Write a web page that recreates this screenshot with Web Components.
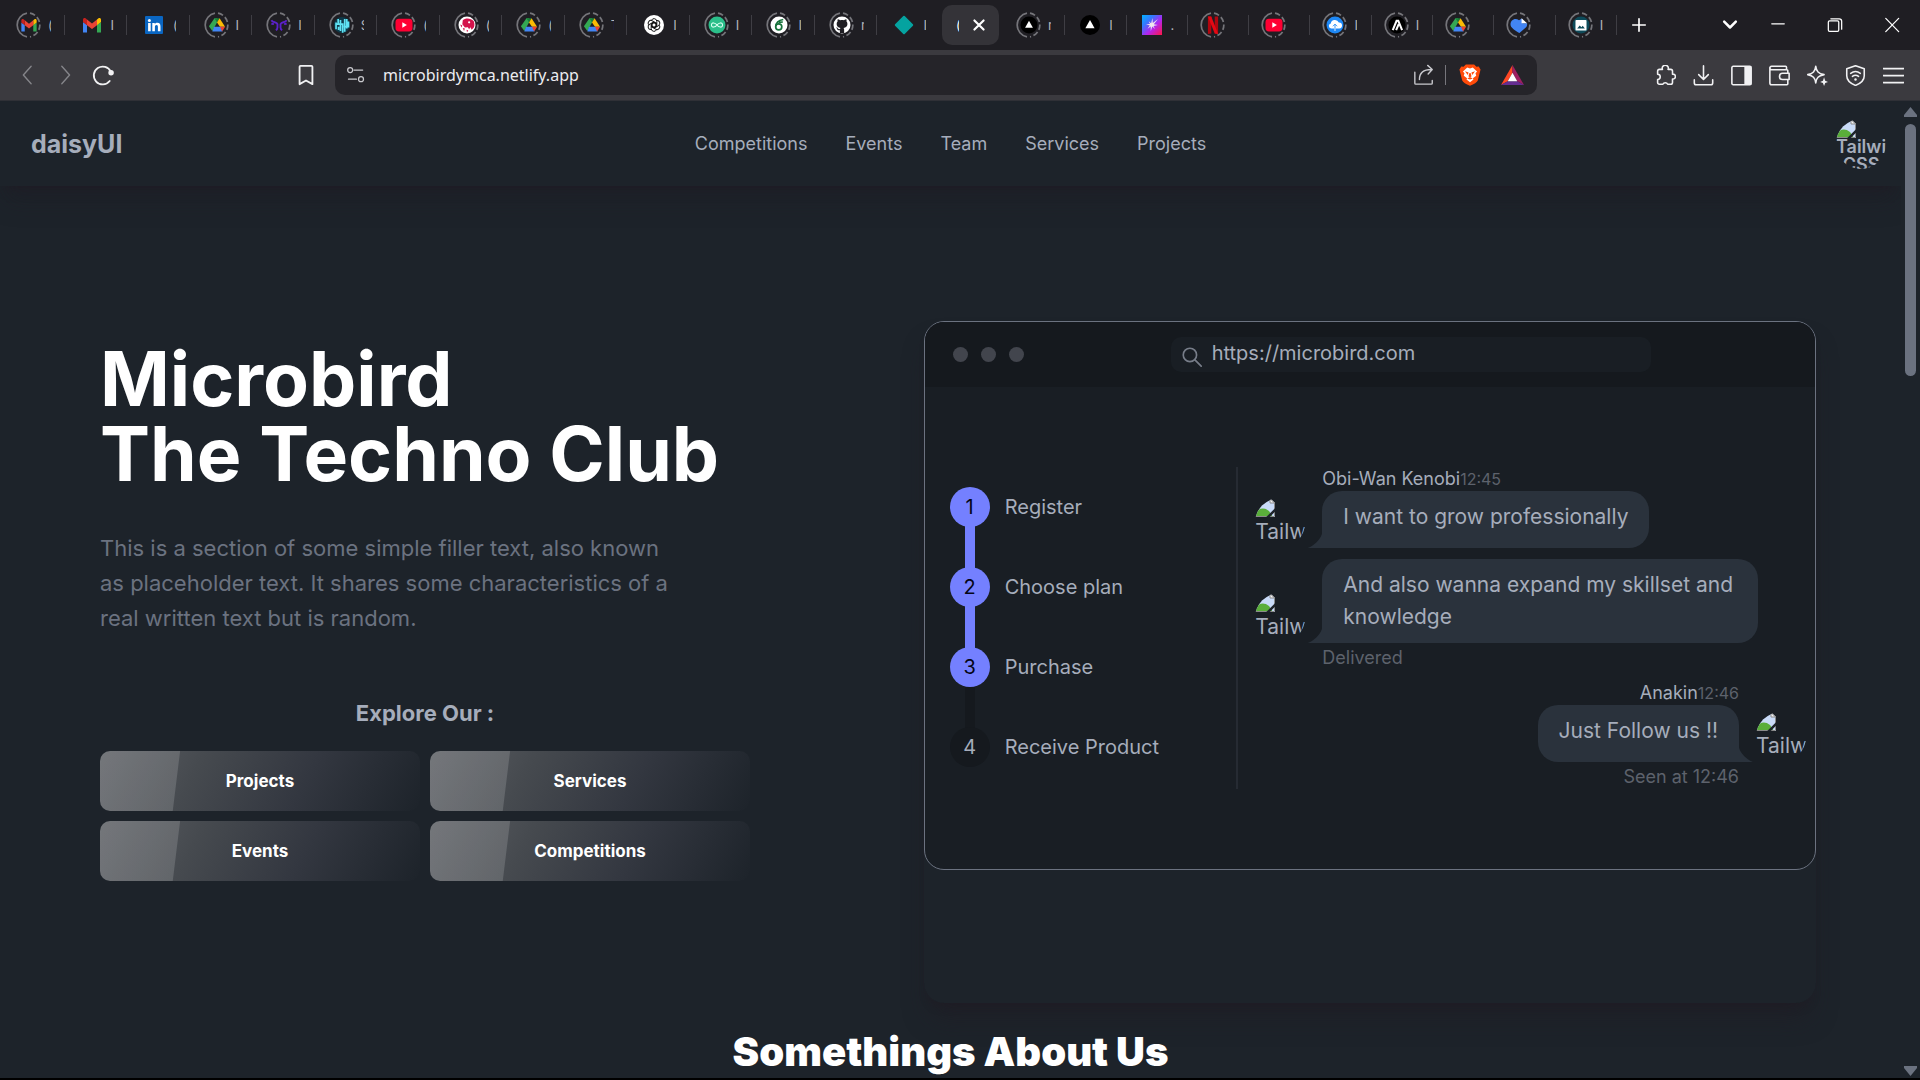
<!DOCTYPE html>
<html lang="en">
<head>
<meta charset="utf-8">
<title>Microbird</title>
<style>
  html, body {
    margin: 0;
    height: 100%;
    overflow: hidden;
    background: #000000;
    font-family: Inter, "Liberation Sans", sans-serif;
  }
</style>
</head>
<body>
<mb-window>
  <mb-tab-strip slot="chrome"></mb-tab-strip>
  <mb-toolbar slot="chrome" url="microbirdymca.netlify.app"></mb-toolbar>
  <mb-navbar></mb-navbar>
  <mb-hero>
    <mb-intro></mb-intro>
    <mb-mockup slot="aside" url="https://microbird.com">
      <mb-steps slot="steps"></mb-steps>
      <mb-chat name="Obi-Wan Kenobi" time="12:45">I want to grow professionally</mb-chat>
      <mb-chat footer="Delivered">And also wanna expand my skillset and knowledge</mb-chat>
      <mb-chat end name="Anakin" time="12:46" footer="Seen at 12:46">Just Follow us !!</mb-chat>
    </mb-mockup>
  </mb-hero>
  <mb-section-title>Somethings About Us</mb-section-title>
</mb-window>

<script>
'use strict';

// Favicons, drawn on a 20x20 board
const FAVICONS = {
  gmail: `
    <path fill="#4285f4" d="M1 17.500V7l4 3v7.500z"/>
    <path fill="#34a853" d="M15 17.500V10l4-3v10.500z"/>
    <path fill="#fbbc04" d="M15 4.500l1.500-1.200C17.600 2.400 19 3.200 19 4.600V7l-4 3.200z"/>
    <path fill="#ea4335" d="M5 10.200V4.500l5 3.900 5-3.900v5.700l-5 3.900z"/>
    <path fill="#c5221f" d="M1 7V4.600c0-1.400 1.400-2.200 2.500-1.300L5 4.500v5.700z"/>`,
  linkedin: `
    <rect x="1" y="1" width="18" height="18" rx="1" fill="#0a66c2"/>
    <circle cx="5.400" cy="5.400" r="1.500" fill="#fff"/>
    <path fill="#fff" d="M4.100 8h2.600v8.300H4.100zM8.300 8h2.500v1.200c.5-.9 1.500-1.400 2.600-1.400 2.400 0 3.100 1.500 3.100 3.900v4.600h-2.600v-4.200c0-1.300-.3-2.100-1.400-2.100s-1.600.9-1.600 2.100v4.200H8.300z"/>`,
  drive: `
    <path fill="#34a853" d="M7 2h3l0 5-5.500 10-4-5.500z"/>
    <path fill="#188038" d="M7 2h6l-3 5z"/>
    <path fill="#fbbc04" d="M13 2l6.500 10h-6L10 7z"/>
    <path fill="#4285f4" d="M6.500 12h9l1 5.500h-12z"/>
    <path fill="#ea4335" d="M13.500 12h6l-3.500 5.500z"/>`,
  antlers: `
    <path fill="none" stroke="#5b21c9" stroke-width="2.200" d="M1 4.500c2 3.500 6 1 7.200 4.500v4c0 1.500-.7 2.500-2 3M19 4.500c-2 3.500-6 1-7.200 4.500v4c0 1.500.7 2.500 2 3M1 8.500l3 .5M19 8.500l-3 .5"/>`,
  wave: `
    <circle cx="10" cy="10" r="9.500" fill="#0f3a4a"/>
    <path fill="none" stroke="#5fe3f4" stroke-width="2" d="M3 7v8M5.500 3v7M6 12v4M8.200 4v13M10.800 8v11M13.200 3v15M15.600 3v11M17.600 6v7M4 9h6M12 12h5"/>`,
  youtube: `
    <rect x="0" y="2.500" width="20" height="15" rx="4" fill="#ff0033"/>
    <path fill="#fff" d="M8 6.800v6.400l5.400-3.200z"/>`,
  dino: `
    <circle cx="10" cy="10" r="10" fill="#fff"/>
    <path fill="#d4124b" d="M5 4.500C8 1.500 14 1.500 18 5.500c1 2.500 1 5.500 0 7.500l-2.500 2.500-1.500-3-1.500 2.500-1.500-2.300-3.500.3L4.500 9z"/>
    <circle cx="12.500" cy="6.800" r="1.300" fill="#fff"/>
    <path fill="#d4124b" d="M2 9.500l2.500 1-1 2.500zM5 13.500l2.500.5-1 3zM9.500 15.500l2 1-1.500 2z"/>`,
  openai: `
    <circle cx="10" cy="10" r="10" fill="#fff"/>
    <g fill="none" stroke="#111" stroke-width="1">
      ${[0, 60, 120, 180, 240, 300].map(deg => `
        <path transform="rotate(${deg} 10 10)" d="M7.500 5.200a2.800 2.800 0 0 1 5.300 1.300v4.300l-2.800 1.600-2.800-1.600"/>`).join('')}
    </g>`,
  infinity: `
    <circle cx="10" cy="10" r="10" fill="#2bbf8a"/>
    <path fill="none" stroke="#d7fff0" stroke-width="1.300" d="M10 10c-2-3-6.500-3.500-6.500 0s4.500 3 6.500 0 6.500-3.500 6.500 0-4.500 3-6.500 0"/>`,
  six: `
    <circle cx="10" cy="10" r="10" fill="#fff"/>
    <circle cx="9.700" cy="12.200" r="3.600" fill="none" stroke="#18733c" stroke-width="2"/>
    <path fill="none" stroke="#18733c" stroke-width="2" d="M6.200 11.500C6.500 7 9.500 4.500 15 3.500M9.500 6.800l5-.3"/>`,
  github: `
    <circle cx="10" cy="10" r="10" fill="#fff"/>
    <path fill="#1f1e23" d="M7.500 19.500v-3.300c-2 .4-2.900-.6-3.400-1.900-.3-.7-1-1-1-1.300 1-.5 1.800.4 2.200 1.100.6.900 1.400.9 2.300.6.100-.6.400-1 .7-1.300-2.800-.4-4.600-1.700-4.600-4.600 0-1.200.4-2 1.100-2.800-.2-.9-.2-1.900.2-2.800 1 0 1.900.5 2.800 1.100 1.400-.3 3.100-.3 4.500 0 .9-.6 1.800-1.100 2.800-1.100.4.900.4 1.900.2 2.800.7.800 1.100 1.600 1.100 2.800 0 2.900-1.800 4.200-4.600 4.600.5.500.7 1.200.7 2.100v4z"/>`,
  diamond: `<rect x="3.200" y="3.200" width="13.600" height="13.600" rx="1" transform="rotate(45 10 10)" fill="#05a3a0"/>`,
  vercel: `
    <circle cx="10" cy="10" r="10" fill="#000"/>
    <path fill="#fff" d="M10 5l4.600 8.200H5.400z"/>`,
  spark: `
    <defs><linearGradient id="sp" x1="0" y1="0" x2="1" y2="1">
      <stop offset="0" stop-color="#00b2ff"/><stop offset=".3" stop-color="#3478ff"/>
      <stop offset=".6" stop-color="#b423ee"/><stop offset="1" stop-color="#ff1744"/>
    </linearGradient></defs>
    <rect width="20" height="20" fill="url(#sp)"/>
    <path fill="#efe6ee" d="M10.500 3l.3 5 5.200-4-4.200 5.200 4 .8-4.300.9 1.500 3.100-2.700-2.400L8.800 16l-.1-4.500-3.200 2.200 2.300-3.300L4 9.300l4-.4-1.300-2.600 2.400 1.900z"/>`,
  netflix: `
    <path fill="#b1060f" d="M4 0h4v20l-4 .5zM12 0h4v20.500l-4-.5z"/>
    <path fill="#e50914" d="M4 0h4l8 20.500-4-.5z"/>`,
  cloud: `
    <circle cx="10" cy="10" r="10" fill="#1e88f5"/>
    <path fill="#fff" d="M5.500 14a3 3 0 0 1-.5-5.900A5 5 0 0 1 14.500 7a3.500 3.500 0 0 1 .5 7z"/>
    <path fill="none" stroke="#1e88f5" stroke-width="1" d="M10 14V9M7.500 11.500L10 9l2.500 2.500"/>
    <path stroke="#fff" d="M10 14v3"/>`,
  peak: `
    <circle cx="10" cy="10" r="10" fill="#000"/>
    <path fill="none" stroke="#fff" stroke-width="2.400" d="M5 16l4.500-11h2L16 16M9 16l3-7"/>`,
  heart: `
    <path fill="#4285f4" d="M0 9.500C0 4 5.500 1 10 4.500c1.500-1.500 3-2 4-2V8h5.500c.3 2.500-.5 4-1.500 5l-7.500 6.500C6 17 0 13.500 0 9.500z"/>
    <path fill="#fff" d="M13 2l6.500 6H13z"/>`,
  photo: `
    <circle cx="10" cy="10" r="10" fill="#0d4a59"/>
    <rect x="3.500" y="4" width="13" height="12.500" rx="1" fill="#fff"/>
    <path fill="#0d4a59" d="M5.500 14l3-3.500 2 2 1.500-1.500 2.500 3z"/>`
};

// Window and toolbar icons, drawn on a 24x24 board with currentColor strokes
const ICONS = {
  back: '<path d="M16.500 2.500L8 12l8.500 9.500"/>',
  forward: '<path d="M8.500 2.500L17 12l-8.500 9.500"/>',
  reload: '<path stroke-width="2" d="M20.500 8.500A9.700 9.700 0 1 0 19.300 18.500"/><circle cx="20.800" cy="9.600" r="3" fill="currentColor" stroke="none"/>',
  bookmark: '<path stroke-width="2" d="M6 2h12a1 1 0 0 1 1 1v19l-7-4-7 4V3a1 1 0 0 1 1-1z"/>',
  tune: '<circle cx="5" cy="6" r="3"/><path d="M9.500 6H20M3 17h9.500"/><circle cx="18" cy="17" r="3"/>',
  share: '<path d="M2 9v12a1 1 0 0 0 1 1h17a1 1 0 0 0 1-1v-3M7 17c0-7 4-11 13-11M16 1.500L21 6l-4.500 5"/>',
  puzzle: '<path stroke-width="1.800" d="M3 7a2 2 0 0 1 2-2h3.500a3.500 3.500 0 1 1 6.500 0H18a2 2 0 0 1 2 2v3.500a2.800 2.800 0 1 1 0 5.500V20a2 2 0 0 1-2 2h-3.500a3 3 0 0 0-5.500 0H5a2 2 0 0 1-2-2v-3.500a3 3 0 0 0 0-6z"/>',
  download: '<path stroke-width="1.800" d="M12 1v15M6.500 11l5.500 5.500 5.500-5.500M1.500 17v3.500a2 2 0 0 0 2 2h17a2 2 0 0 0 2-2V17"/>',
  panel: '<rect x="1" y="1.500" width="22" height="21" rx="1.500" stroke-width="1.800"/><path fill="currentColor" d="M16 2h6.500v20H16z"/>',
  wallet: '<path stroke-width="1.800" d="M20 4.500V2.500a1 1 0 0 0-1-1H3A2 2 0 0 0 1 4v16.500a2 2 0 0 0 2 2h17.500a1 1 0 0 0 1-1V17M1 3.500a2 2 0 0 0 2 2h17.500a1 1 0 0 1 1 1V9.500M23 9.500h-7.500a3.500 3.500 0 0 0 0 7H23z"/>',
  sparkle: '<path stroke-width="1.800" d="M10 1.500c.8 6 3 8 9.500 9.500-6.500 1.500-8.700 3.500-9.500 9.500C9.200 14.500 7 12.500.8 11 7 9.500 9.200 7.500 10 1.500z"/><path stroke="none" fill="#3b3a3f" d="M14 15h10v9H14z"/><path stroke="none" fill="currentColor" d="M19.500 14l1.300 4 3.200 1.300-3.200 1.200-1.300 3.500-1.300-3.500-3.200-1.200 3.200-1.300z"/>',
  vpn: '<path stroke-width="1.800" d="M12 .8l10 3.500v8c0 5-4 8.700-10 11-6-2.300-10-6-10-11v-8z"/><path stroke-width="1.800" d="M6.500 9.500c3.500-2.700 7.500-2.700 11 0M8.500 13c2.200-1.700 4.800-1.700 7 0"/><circle cx="12" cy="16.500" r="1.400" fill="currentColor" stroke="none"/>',
  menu: '<path stroke-width="2" d="M.5 4h23M.5 12h23M.5 20h23"/>',
  plus: '<path stroke-width="2" d="M12 4.500v15M4.500 12h15"/>',
  chevron: '<path stroke-width="3" d="M5 8l7 7 7-7"/>',
  minimize: '<path stroke-width="1.500" d="M4.500 10.500h15"/>',
  restore: '<rect x="4" y="7" width="12.500" height="12.500" rx="1.500"/><path d="M7 4.500h10a3 3 0 0 1 3 3V17"/>',
  close: '<path d="M4.500 4l15.500 16M20 4L4.500 20"/>',
  cross: '<path stroke-width="2.600" d="M6.500 6.500l11 11M17.500 6.500l-11 11"/>',
  search: '<circle cx="9.500" cy="9.500" r="8" stroke-width="2"/><path stroke-width="2" d="M15.500 15.500l7.500 7.500"/>',
  brave: `<path fill="#ff4b0a" stroke="none" d="M7.500.5h9l2.500 2.500 2.500-.3L23.500 6l-.7 3-2.300 9c-.7 2-4 4-8.500 5.700C7.500 22 4.200 20 3.500 18L1.200 9 .5 6l2-3.300L5 3z"/>
    <path fill="#fff" stroke="none" d="M12 5l3-1.200 4.700 4.500L18 10.200l.8 2.600-3.600 2.700.6 1.500L12 20l-3.800-3 .6-1.500-3.600-2.700.8-2.600-1.700-1.900L9 3.800z"/>
    <path fill="#ff4b0a" stroke="none" d="M6.500 8l4 1.300-1 2.700zM17.500 8l-4 1.300 1 2.700zM11 10h2l.6 3.500-1.600 1-1.600-1zM9 15.800l3-1.600 3 1.600-3 1z"/>`,
  bat: `<g stroke="none"><path fill="#ff4724" d="M12 1L0 22l7-4 5-9z"/><path fill="#9e1f63" d="M12 1l12 21-7-4-5-9z"/><path fill="#662d91" d="M0 22h24l-7-4H7z"/><path fill="#fff" d="M12 9l5 9H7z"/></g>`
};

function icon(name, size = 24) {
  return `<svg width="${size}" height="${size}" viewBox="0 0 24 24" fill="none" stroke="currentColor"
    stroke-width="1.500" stroke-linecap="round" stroke-linejoin="round" aria-hidden="true">${ICONS[name]}</svg>`;
}

class MbElement extends HTMLElement {
  constructor() {
    super();
    const template = document.createElement('template');
    template.innerHTML = `
      <style>
        * { box-sizing: border-box; }
        svg { display: block; flex: none; }
        a { color: inherit; text-decoration: none; }
        button, input { font: inherit; color: inherit; background: none; border: 0; padding: 0; margin: 0; }
        button { display: grid; place-items: center; }
      </style>
      ${this.markup()}`;
    this._sR = this.attachShadow({ mode: 'open' });
    this._sR.appendChild(template.content.cloneNode(true));
  }
}

window.customElements.define('mb-window', class extends MbElement {
  markup() {
    return `
      <style>
        :host {
          display: flex;
          flex-direction: column;
          height: 100vh;
          padding-bottom: 2px;
          box-sizing: border-box;
        }
        .view {
          flex: 1;
          min-height: 0;
          display: flex;
          background: #1d232a;
          color: #a6adbb;
        }
        .page { flex: 1; min-width: 0; overflow: hidden; }
        .scrollbar {
          width: 19px;
          display: flex;
          flex-direction: column;
          align-items: center;
          gap: 7px;
          padding: 6px 0 2px;
          box-sizing: border-box;
        }
        .scrollbar svg { fill: #6b7280; }
        .track { flex: 1; width: 11px; }
        .thumb { height: 27%; border-radius: 6px; background: #6b7280; }
      </style>
      <slot name="chrome"></slot>
      <div class="view">
        <main class="page"><slot></slot></main>
        <div class="scrollbar" aria-hidden="true">
          <svg width="13" height="10" viewBox="0 0 13 10"><path d="M6.500 0L13 8v2H0V8z"/></svg>
          <div class="track"><div class="thumb"></div></div>
          <svg width="13" height="10" viewBox="0 0 13 10"><path d="M6.500 10L13 2V0H0v2z"/></svg>
        </div>
      </div>`;
  }
});

window.customElements.define('mb-favicon', class extends MbElement {
  markup() {
    const ring = this.hasAttribute('ring');
    const art = FAVICONS[this.getAttribute('name')] || '';
    // Sleeping tabs get a ring, solid on the left and dashed on the right
    return `
      <style>
        :host { display: block; width: 26px; height: 26px; }
      </style>
      <svg width="26" height="26" viewBox="0 0 26 26" aria-hidden="true">
        ${ring ? `
          <path d="M11 1.200A12 12 0 0 0 11 24.800" fill="none" stroke="#75757a" stroke-width="1.700"/>
          <path d="M14 1.200A12 12 0 0 1 14 24.800" fill="none" stroke="#75757a" stroke-width="1.700" stroke-dasharray="5.500 2.500"/>
          <g transform="translate(4.500 4.500) scale(.85)">${art}</g>`
        : `<g transform="translate(3 3)">${art}</g>`}
      </svg>`;
  }
});

window.customElements.define('mb-tab-strip', class extends MbElement {
  tabs(list) {
    return list.map(([name, label, ring]) => `
      <button class="tab" type="button" aria-label="${name}">
        <mb-favicon name="${name}" ${ring ? 'ring' : ''}></mb-favicon>
        <span>${label}</span>
      </button>`).join('');
  }

  markup() {
    const left = [
      ['gmail', '(', 1], ['gmail', 'I', 0], ['linkedin', '(', 0], ['drive', 'I', 1], ['antlers', 'I', 1],
      ['wave', 'S', 1], ['youtube', '(', 1], ['dino', '(', 1], ['drive', '(', 1], ['drive', 'T', 1],
      ['openai', 'I', 0], ['infinity', 'I', 1], ['six', 'I', 1], ['github', 'r', 1], ['diamond', 'I', 0]
    ];
    const right = [
      ['vercel', 'r', 1], ['vercel', 'I', 0], ['spark', '.', 0], ['netflix', '', 1], ['youtube', '', 1],
      ['cloud', 'I', 1], ['peak', 'I', 1], ['drive', '', 1], ['heart', '', 1], ['photo', 'I', 1]
    ];
    return `
      <style>
        :host {
          display: flex;
          align-items: center;
          height: 50px;
          padding-left: 2px;
          background: #1f1e23;
          color: #ffffff;
          box-sizing: border-box;
        }
        .group { display: flex; min-width: 0; }
        .left { flex: 938 1 0; margin-right: 2px; }
        .right { flex: 613 1 0; margin-left: 5px; }
        .tab {
          flex: 1 1 0;
          min-width: 0;
          display: flex;
          align-items: center;
          height: 20px;
          padding-left: 14px;
          border-right: 1px solid #3f3e44;
        }
        .right .tab { padding-left: 12px; }
        .left .tab:last-child { border-color: transparent; }
        .tab span {
          width: 3px;
          margin-left: 6px;
          overflow: hidden;
          font-size: 13px;
          line-height: 20px;
          color: #b5b5ba;
        }
        .active {
          width: 57px;
          height: 40px;
          display: flex;
          align-items: center;
          gap: 10px;
          padding-left: 14px;
          border-radius: 10px;
          background: #343338;
        }
        .active span { width: 3px; overflow: hidden; font-size: 13px; }
        .controls { display: flex; }
        .controls button { width: 57px; }
        .controls button:first-child { width: 43px; margin-right: 50px; }
        .controls button:nth-child(2) { width: 39px; }
      </style>
      <div class="group left">${this.tabs(left)}</div>
      <div class="active">
        <span>(</span>
        <button type="button" aria-label="Close tab">${icon('cross', 20)}</button>
      </div>
      <div class="group right">${this.tabs(right)}</div>
      <div class="controls">
        <button type="button" aria-label="New tab">${icon('plus', 20)}</button>
        <button type="button" aria-label="Search tabs">${icon('chevron', 20)}</button>
        <button type="button" aria-label="Minimize">${icon('minimize', 20)}</button>
        <button type="button" aria-label="Restore">${icon('restore', 20)}</button>
        <button type="button" aria-label="Close">${icon('close', 20)}</button>
      </div>`;
  }
});

window.customElements.define('mb-toolbar', class extends MbElement {
  markup() {
    return `
      <style>
        :host {
          display: flex;
          align-items: center;
          height: 51px;
          padding: 0 16px;
          background: #3b3a3f;
          border-bottom: 1px solid #2f3036;
          color: #f1f1f3;
          box-sizing: border-box;
        }
        .history { display: flex; gap: 16px; }
        .history button:not(:last-child) { color: #85858a; }
        .bookmark { margin-left: auto; }
        .address {
          flex: 0 0 1202px;
          display: flex;
          align-items: center;
          height: 40px;
          margin: 0 118px 0 18px;
          padding: 0 13px 0 11px;
          border-radius: 10px;
          background: #252429;
          color: #c9c9ce;
        }
        .address input {
          flex: 1;
          min-width: 0;
          margin-left: 17px;
          font-family: "Noto Sans", "Open Sans", sans-serif;
          font-size: 16px;
          color: #ececf0;
          outline: 0;
        }
        .rule { width: 1px; height: 20px; margin: 0 13px 0 10px; background: #77767c; }
        .shield { margin-right: 20px; }
        .tools { display: flex; gap: 17px; }
      </style>
      <div class="history">
        <button type="button" aria-label="Back">${icon('back', 22)}</button>
        <button type="button" aria-label="Forward">${icon('forward', 22)}</button>
        <button type="button" aria-label="Reload">${icon('reload', 22)}</button>
      </div>
      <button class="bookmark" type="button" aria-label="Bookmark">${icon('bookmark', 22)}</button>
      <div class="address">
        <button type="button" aria-label="Site settings">${icon('tune', 20)}</button>
        <input type="text" aria-label="Address" value="${this.getAttribute('url')}">
        <button type="button" aria-label="Share">${icon('share', 22)}</button>
        <span class="rule"></span>
        <button class="shield" type="button" aria-label="Shields">${icon('brave', 22)}</button>
        <button type="button" aria-label="Rewards">${icon('bat', 23)}</button>
      </div>
      <div class="tools">
        ${['puzzle', 'download', 'panel', 'wallet', 'sparkle', 'vpn', 'menu'].map(name => `
          <button type="button" aria-label="${name}">${icon(name, 21)}</button>`).join('')}
      </div>`;
  }
});

// Round avatar whose picture is missing: broken image mark and its alt text
window.customElements.define('mb-avatar', class extends MbElement {
  markup() {
    return `
      <style>
        :host {
          display: block;
          width: 50px;
          height: 50px;
          overflow: hidden;
          border-radius: 50%;
        }
      </style>
      <svg width="20" height="19" viewBox="0 0 20 19" aria-hidden="true">
        <path fill="#c9dbf8" d="M0 0h15l5 5v14H0z"/>
        <path fill="#5aae3a" d="M0 19v-4c4-5 9-6 14-2l4 6z"/>
        <path fill="none" stroke="#8a8a8a" stroke-width="1" d="M.5 18.500V.5h14.500l4.500 4.500v13.500z"/>
        <path fill="#f4f4f4" stroke="#8a8a8a" d="M15 .5v4.500h4.500z"/>
        <path stroke="#1d232a" stroke-width="2.500" d="M12 20L21 11"/>
      </svg>
      <slot></slot>`;
  }
});

window.customElements.define('mb-navbar', class extends MbElement {
  markup() {
    return `
      <style>
        :host {
          display: grid;
          grid-template-columns: 1fr auto 1fr;
          align-items: center;
          height: 85px;
          padding: 0 15px;
          box-shadow: 0 20px 25px -5px rgba(31, 28, 36, .35), 0 8px 10px -6px rgba(31, 28, 36, .8);
          box-sizing: border-box;
        }
        .brand { padding-left: 16px; font-size: 25px; font-weight: 700; }
        nav { display: flex; gap: 38px; font-size: 18px; }
        mb-avatar {
          justify-self: end;
          font-size: 18px;
          font-weight: 600;
          line-height: 18px;
          text-align: center;
        }
      </style>
      <a class="brand" href="#">daisyUI</a>
      <nav>
        ${['Competitions', 'Events', 'Team', 'Services', 'Projects'].map(item => `
          <a href="#${item.toLowerCase()}">${item}</a>`).join('')}
      </nav>
      <mb-avatar>Tailwind CSS</mb-avatar>`;
  }
});

window.customElements.define('mb-hero', class extends MbElement {
  markup() {
    return `
      <style>
        :host {
          display: flex;
          justify-content: space-between;
          align-items: flex-start;
          padding: 135px 85px 0 100px;
        }
        .aside {
          flex: 0 0 52%;
          min-width: 0;
          padding-bottom: 133px;
          border-radius: 20px;
          box-shadow: 0 20px 25px -5px rgba(31, 28, 36, .5), 0 8px 10px -6px rgba(31, 28, 36, .8);
        }
      </style>
      <slot></slot>
      <div class="aside"><slot name="aside"></slot></div>`;
  }
});

window.customElements.define('mb-intro', class extends MbElement {
  markup() {
    return `
      <style>
        :host { display: block; width: 650px; padding-top: 20px; }
        h1 {
          margin: 0 0 40px;
          font-size: 75px;
          line-height: 75px;
          font-weight: 700;
          color: #ffffff;
        }
        p {
          max-width: 580px;
          margin: 0 0 60px;
          font-size: 22px;
          line-height: 35px;
          color: #6b7280;
        }
        h2 {
          margin: 0 0 20px;
          font-size: 22px;
          line-height: 35px;
          font-weight: 700;
          text-align: center;
        }
        .actions { display: grid; grid-template-columns: 1fr 1fr; gap: 10px; }
        .actions button {
          height: 60px;
          border-radius: 10px;
          font-size: 17px;
          font-weight: 700;
          color: #ffffff;
          background:
            linear-gradient(97deg, rgba(255, 255, 255, .15) 79px, transparent 80px),
            linear-gradient(118deg, #5c5f64, #464a4f 30%, #333740 63%, #1d232a);
        }
      </style>
      <h1>Microbird<br>The Techno Club</h1>
      <p>This is a section of some simple filler text, also known as placeholder text. It shares some characteristics of a real written text but is random.</p>
      <h2>Explore Our :</h2>
      <div class="actions">
        <button type="button">Projects</button>
        <button type="button">Services</button>
        <button type="button">Events</button>
        <button type="button">Competitions</button>
      </div>`;
  }
});

window.customElements.define('mb-mockup', class extends MbElement {
  markup() {
    return `
      <style>
        :host {
          display: block;
          overflow: hidden;
          border: 1px solid #6b7280;
          border-radius: 20px;
          background: #191e24;
        }
        header {
          display: flex;
          align-items: center;
          height: 65px;
          padding: 0 28px;
          background: #15191e;
        }
        .dots { display: flex; gap: 13px; }
        .dots i { width: 15px; height: 15px; border-radius: 50%; background: #42454d; }
        label {
          display: flex;
          align-items: center;
          gap: 10px;
          width: 480px;
          height: 35px;
          margin-left: 147px;
          padding: 0 11px;
          border-radius: 10px;
          background: #191e24;
        }
        label svg { margin-top: 5px; color: #777d89; }
        input { flex: 1; min-width: 0; padding-bottom: 3px; font-size: 20px; outline: 0; }
        .body { display: flex; padding: 80px 0; }
        .steps { flex: 0 0 35%; }
        .chat {
          flex: 1;
          min-width: 0;
          display: flex;
          flex-direction: column;
          gap: 11px;
          padding: 0 9px 0 17px;
          border-left: 2px solid #262b33;
        }
      </style>
      <header>
        <div class="dots"><i></i><i></i><i></i></div>
        <label>
          ${icon('search', 20)}
          <input type="text" aria-label="Site address" value="${this.getAttribute('url')}">
        </label>
      </header>
      <div class="body">
        <div class="steps"><slot name="steps"></slot></div>
        <div class="chat"><slot></slot></div>
      </div>`;
  }
});

window.customElements.define('mb-steps', class extends MbElement {
  markup() {
    const steps = ['Register', 'Choose plan', 'Purchase', 'Receive Product'];
    return `
      <style>
        :host { display: block; padding-left: 25px; font-size: 20px; }
        ol { margin: 0; padding: 0; list-style: none; }
        li {
          position: relative;
          display: flex;
          align-items: center;
          gap: 15px;
          height: 80px;
        }
        li + li::before {
          content: "";
          position: absolute;
          left: 15px;
          top: -40px;
          width: 10px;
          height: 80px;
          background: #15191e;
        }
        b {
          position: relative;
          z-index: 1;
          width: 40px;
          line-height: 40px;
          border-radius: 50%;
          text-align: center;
          font-weight: 400;
          background: #15191e;
        }
        li.done::before { background: #7480ff; }
        .done b { background: #7480ff; color: #050617; }
      </style>
      <ol>
        ${steps.map((step, i) => `
          <li class="${i < 3 ? 'done' : ''}"><b>${i + 1}</b><span>${step}</span></li>`).join('')}
      </ol>`;
  }
});

window.customElements.define('mb-chat', class extends MbElement {
  markup() {
    const name = this.getAttribute('name');
    const footer = this.getAttribute('footer');
    return `
      <style>
        :host {
          display: grid;
          grid-template-columns: 50px 1fr;
          column-gap: 17px;
          justify-items: start;
          font-size: 21px;
        }
        :host([end]) { grid-template-columns: 1fr 50px; justify-items: end; }
        mb-avatar { grid-column: 1; grid-row: 2; align-self: end; line-height: 30px; }
        :host([end]) mb-avatar { grid-column: 2; }
        .head, .foot, .bubble { grid-column: 2; }
        :host([end]) .head, :host([end]) .foot, :host([end]) .bubble { grid-column: 1; }
        .head { grid-row: 1; font-size: 18px; line-height: 24px; }
        .head time { font-size: 16px; color: #5d626c; }
        .foot { grid-row: 3; margin-top: 2px; font-size: 18px; line-height: 25px; color: #5d626c; }
        .bubble {
          grid-row: 2;
          position: relative;
          max-width: 90%;
          min-height: 57px;
          padding: 10px 21px;
          border-radius: 20px 20px 20px 0;
          line-height: 32px;
          background: #2a323c;
        }
        :host([end]) .bubble { border-radius: 20px 20px 0 20px; }
        .bubble svg { position: absolute; right: 100%; bottom: 0; fill: #2a323c; }
        :host([end]) .bubble svg { right: auto; left: 100%; transform: scaleX(-1); }
      </style>
      ${name ? `<div class="head">${name}<time>${this.getAttribute('time')}</time></div>` : ''}
      <mb-avatar>Tailwind</mb-avatar>
      <div class="bubble">
        <slot></slot>
        <svg width="15" height="15" viewBox="0 0 3 3" aria-hidden="true"><path d="M0 3h3V0C3 1 1 3 0 3"/></svg>
      </div>
      ${footer ? `<div class="foot">${footer}</div>` : ''}`;
  }
});

window.customElements.define('mb-section-title', class extends MbElement {
  markup() {
    return `
      <style>
        :host { display: block; padding-top: 24px; }
        h2 {
          margin: 0;
          font-size: 40px;
          line-height: 50px;
          font-weight: 900;
          text-align: center;
          color: #ffffff;
        }
      </style>
      <h2><slot></slot></h2>`;
  }
});
</script>
</body>
</html>
